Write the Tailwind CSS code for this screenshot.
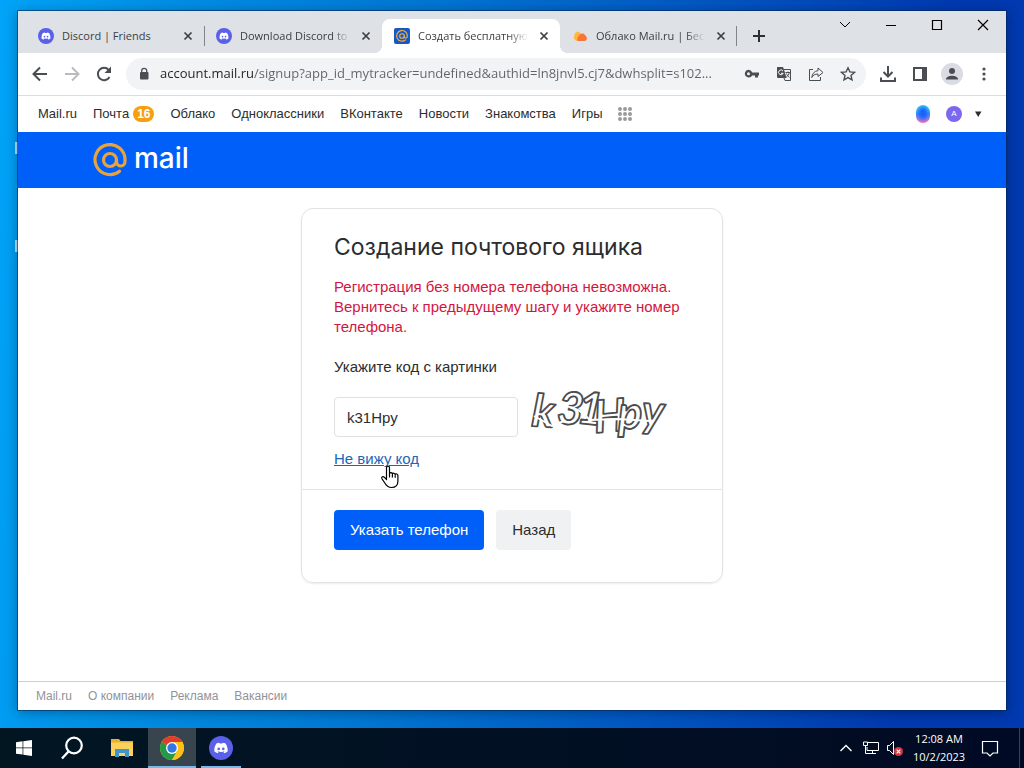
<!DOCTYPE html>
<html lang="ru">
<head>
    <meta charset="UTF-8">
    <meta name="viewport" content="width=device-width, initial-scale=1.0">
    <title>Создать бесплатную почту</title>
    <script src="https://cdn.jsdelivr.net/npm/@tailwindcss/browser@4"></script>
</head>
<body class="relative flex flex-col h-screen overflow-hidden bg-[linear-gradient(95deg,#00a4f8,#0090e6_15%,#0078d4_38%,#0050bf_70%,#0039b0_88%)] font-['Open_Sans','Noto_Sans',sans-serif]">
    <svg class="hidden">
        <symbol id="discord" viewBox="0 0 24 24">
            <circle cx="12" cy="12" r="12" fill="#5b60e8"/>
            <path fill="#fff" d="M16.6 7.6a11 11 0 0 0-2.9-.9l-.4.8a10 10 0 0 0-2.7 0l-.4-.8a11 11 0 0 0-2.8.9C5.600 10.200 5.100 12.900 5.400 15.600a11 11 0 0 0 3.400 1.700l.8-1.200-1.200-.6.300-.2a8 8 0 0 0 6.600 0l.3.2-1.200.6.800 1.200a11 11 0 0 0 3.400-1.700c.3-3.100-.5-5.700-2-8z"/>
            <circle cx="9.700" cy="12.900" r="1.300" fill="#5b60e8"/>
            <circle cx="14.300" cy="12.900" r="1.300" fill="#5b60e8"/>
        </symbol>
        <symbol id="close" viewBox="0 0 16 16">
            <path d="M4.500 4.500l7 7M11.500 4.500l-7 7" fill="none" stroke="#3c4043" stroke-width="1.700"/>
        </symbol>
        <symbol id="at" viewBox="0 0 34 34">
            <path d="M26.500 28.200A15 15 0 1 1 32 17v1.500c0 6-8.500 6-8.500 0V17" fill="none" stroke="currentColor" stroke-width="3.200" stroke-linecap="round"/>
            <circle cx="17" cy="17" r="6.500" fill="none" stroke="currentColor" stroke-width="3.200"/>
        </symbol>
    </svg>

    <!-- Desktop icon captions behind the window -->
    <span class="absolute left-[15px] top-[142px] w-[3px] h-3 bg-white/70"></span>
    <span class="absolute left-[15px] top-[240px] w-[3px] h-3 bg-white/70"></span>

    <!-- Browser window -->
    <div class="relative flex flex-col flex-1 min-h-0 mt-[11px] mx-[18px] mb-[18px] bg-white shadow-[0_0_0_1px_rgba(0,40,90,0.6),0_2px_12px_rgba(0,0,0,0.35)]">
        <!-- Tabs -->
        <div class="flex h-[42px] bg-[#dee1e6] text-[11px] text-[#3c4043] shrink-0">
            <div class="flex flex-1 min-w-0 pt-2 pl-2">
                <div class="flex items-center gap-2 w-[178px] pl-3 pr-2">
                    <svg class="w-4 h-4 shrink-0"><use href="#discord"/></svg>
                    <span class="flex-1 overflow-hidden whitespace-nowrap">Discord | Friends</span>
                    <button class="w-4 h-4" aria-label="Close tab"><svg class="w-4 h-4"><use href="#close"/></svg></button>
                </div>
                <div class="relative flex items-center gap-2 w-[178px] pl-3 pr-2">
                    <span class="absolute left-0 top-[7px] w-px h-5 bg-[#80868b]"></span>
                    <svg class="w-4 h-4 shrink-0"><use href="#discord"/></svg>
                    <span class="flex-1 overflow-hidden whitespace-nowrap [mask-image:linear-gradient(90deg,#000_84%,transparent)]">Download Discord to</span>
                    <button class="w-4 h-4" aria-label="Close tab"><svg class="w-4 h-4"><use href="#close"/></svg></button>
                </div>
                <div class="relative flex items-center gap-2 w-[178px] pl-3 pr-2 rounded-t-lg bg-white">
                    <span class="absolute -left-2 bottom-0 w-2 h-2 bg-[radial-gradient(circle_at_0_0,transparent_8px,#fff_8px)]"></span>
                    <span class="absolute -right-2 bottom-0 w-2 h-2 bg-[radial-gradient(circle_at_100%_0,transparent_8px,#fff_8px)]"></span>
                    <span class="w-4 h-4 p-0.5 rounded-xs bg-[#1757c8] text-[#f3b13a] shrink-0"><svg class="w-3 h-3"><use href="#at"/></svg></span>
                    <span class="flex-1 overflow-hidden whitespace-nowrap [mask-image:linear-gradient(90deg,#000_82%,transparent)]">Создать бесплатную</span>
                    <button class="w-4 h-4" aria-label="Close tab"><svg class="w-4 h-4"><use href="#close"/></svg></button>
                </div>
                <div class="relative flex items-center gap-2 w-[177px] pl-3 pr-2">
                    <span class="absolute right-0 top-[7px] w-px h-5 bg-[#80868b]"></span>
                    <svg class="w-4 h-4 shrink-0" viewBox="0 0 16 16">
                        <path d="M5 13a4 4 0 0 1-2.500-6C2.500 4.500 5 3 7.500 4L10 8l-2 5z" fill="#ffb73d"/>
                        <path d="M6 13c-1.500-2 0-4.500 1-5 .5-3 5-3.500 6.300-.5C16 9.500 15 13 12.500 13z" fill="#f9743a"/>
                    </svg>
                    <span class="flex-1 overflow-hidden whitespace-nowrap [mask-image:linear-gradient(90deg,#000_82%,transparent)]">Облако Mail.ru | Бес</span>
                    <button class="w-4 h-4" aria-label="Close tab"><svg class="w-4 h-4"><use href="#close"/></svg></button>
                </div>
                <button class="ml-3.5" aria-label="New tab">
                    <svg class="w-4 h-4" viewBox="0 0 16 16"><path d="M8 2v12M2 8h12" stroke="#2c2f33" stroke-width="2"/></svg>
                </button>
            </div>
            <div class="flex h-7 text-black">
                <button class="grid place-items-center w-[46px]" aria-label="Search tabs">
                    <svg class="w-3 h-3" viewBox="0 0 12 12"><path d="M1 3l5 5 5-5" fill="none" stroke="currentColor"/></svg>
                </button>
                <button class="grid place-items-center w-[46px]" aria-label="Minimize">
                    <svg class="w-3 h-3" viewBox="0 0 12 12"><path d="M1 6.500h10" stroke="currentColor"/></svg>
                </button>
                <button class="grid place-items-center w-[46px]" aria-label="Maximize">
                    <svg class="w-3 h-3" viewBox="0 0 12 12"><path d="M1.500 1.500h9v9h-9z" fill="none" stroke="currentColor" stroke-width="1.200"/></svg>
                </button>
                <button class="grid place-items-center w-[46px]" aria-label="Close">
                    <svg class="w-3 h-3" viewBox="0 0 12 12"><path d="M1 1l10 10M11 1L1 11" stroke="currentColor" stroke-width="1.200"/></svg>
                </button>
            </div>
        </div>

        <!-- Toolbar -->
        <div class="flex items-center h-[43px] px-3 border-b border-[#dadce0] text-[#4a4d51] shrink-0">
            <button class="mr-3" aria-label="Back"><svg class="w-5 h-5" viewBox="0 0 20 20"><path d="M17 10H4M10 3.500L3.500 10l6.500 6.500" fill="none" stroke="currentColor" stroke-width="2"/></svg></button>
            <button class="mr-3 text-[#b9bbbe]" aria-label="Forward"><svg class="w-5 h-5" viewBox="0 0 20 20"><path d="M3 10h13M10 3.500l6.500 6.500-6.500 6.500" fill="none" stroke="currentColor" stroke-width="2"/></svg></button>
            <button class="mr-3" aria-label="Reload"><svg class="w-5 h-5" viewBox="0 0 20 20"><path d="M15.500 13A6.200 6.200 0 1 1 14.700 5.800" fill="none" stroke="currentColor" stroke-width="2"/><path d="M17 2.500v6.500h-6.500z" fill="currentColor"/></svg></button>
            <div class="flex items-center flex-1 min-w-0 h-8 pl-2.5 pr-2 rounded-full bg-[#f1f3f4]">
                <svg class="w-4 h-4 mr-2 shrink-0" viewBox="0 0 16 16"><rect x="4" y="6" width="8.500" height="7.500" rx="1" fill="currentColor"/><path d="M5.700 7V4.800a2.500 2.500 0 0 1 5 0V7" fill="none" stroke="currentColor" stroke-width="1.300"/></svg>
                <input type="text" aria-label="Address" value="account.mail.ru/signup?app_id_mytracker=undefined&amp;authid=ln8jnvl5.cj7&amp;dwhsplit=s102..."
                    class="flex-1 min-w-0 text-[13px] text-transparent bg-clip-text bg-[linear-gradient(90deg,#202124_94px,#5f6368_94px)] focus:outline-none">
                <div class="flex items-center gap-4 px-0.5">
                    <button aria-label="Passwords"><svg class="w-4 h-4" viewBox="0 0 16 16"><path fill="currentColor" fill-rule="evenodd" d="M4.500 3.800a3.900 3.900 0 0 1 3.700 2.700H15v3h-1v2h-3v-2H8.200A3.900 3.900 0 1 1 4.500 3.800zm0 2.500a1.500 1.500 0 1 0 0 3 1.500 1.500 0 0 0 0-3z"/></svg></button>
                    <button aria-label="Translate"><svg class="w-4 h-4" viewBox="0 0 16 16"><path fill="currentColor" d="M1 1h6l1 2.500 2.500 8.500H2a1 1 0 0 1-1-1z"/><path d="M8 3.500h6.500v11H9L8 12" fill="none" stroke="currentColor"/><path d="M7 5a2.400 2.400 0 1 0 .2 2.300H5" fill="none" stroke="#fff"/><path d="M9.500 6.500h4.500M12 5.500v1M13.300 6.500c-.3 2-1.500 3.500-3 4.500M10.500 7.500c.5 1.500 1.500 3 3 4" fill="none" stroke="currentColor"/></svg></button>
                    <button aria-label="Share"><svg class="w-4 h-4" viewBox="0 0 16 16"><path d="M5 3.500H1.500v11h11V11M10 2l5 4.500-5 4V8C7 8 5 9 3.800 11.500 4.200 7.500 6.500 5 10 4.700z" fill="none" stroke="currentColor" stroke-linejoin="round"/></svg></button>
                    <button aria-label="Bookmark"><svg class="w-4 h-4" viewBox="0 0 16 16"><path d="M8 1.800l1.900 4.100 4.500.5-3.400 3 1 4.500L8 11.600l-4 2.300 1-4.500-3.400-3 4.500-.5z" fill="none" stroke="currentColor" stroke-width="1.400"/></svg></button>
                </div>
            </div>
            <div class="flex items-center gap-3 pl-3">
                <button aria-label="Downloads"><svg class="w-5 h-5" viewBox="0 0 20 20"><path d="M10 2v10M5.500 8l4.500 4.500L14.500 8M3 13.500V17h14v-3.500" fill="none" stroke="currentColor" stroke-width="2"/></svg></button>
                <button aria-label="Side panel"><svg class="w-5 h-5" viewBox="0 0 20 20"><path d="M4 4h12v12H4z" fill="none" stroke="currentColor" stroke-width="2"/><path d="M12 4h4v12h-4z" fill="currentColor"/></svg></button>
                <button aria-label="Profile"><svg class="w-5 h-5 overflow-visible" viewBox="0 0 20 20"><circle cx="10" cy="10" r="11" fill="#dadce3"/><circle cx="10" cy="7" r="3" fill="currentColor"/><path d="M4 15.500c0-5 12-5 12 0z" fill="currentColor"/></svg></button>
                <button aria-label="Menu"><svg class="w-5 h-5" viewBox="0 0 20 20"><g fill="currentColor"><circle cx="10" cy="5" r="1.600"/><circle cx="10" cy="10" r="1.600"/><circle cx="10" cy="15" r="1.600"/></g></svg></button>
            </div>
        </div>

        <div class="flex flex-col flex-1 min-h-0 font-['Liberation_Sans',Arial,sans-serif] text-[#2c2d2e]">
            <!-- Portal links -->
            <nav class="flex items-center gap-4 h-9 pl-5 pr-6 text-[13px] shrink-0">
                <a href="#">Mail.ru</a>
                <a href="#" class="flex items-center gap-1">Почта <span class="h-4 px-1 leading-4 rounded-full bg-[#f5a00f] text-white text-xs font-bold">16</span></a>
                <a href="#">Облако</a>
                <a href="#">Одноклассники</a>
                <a href="#">ВКонтакте</a>
                <a href="#">Новости</a>
                <a href="#">Знакомства</a>
                <a href="#">Игры</a>
                <button class="-ml-0.5" aria-label="Все проекты">
                    <svg class="w-4 h-4" viewBox="0 0 16 16"><path d="M3 3h0M8 3h0M13 3h0M3 8h0M8 8h0M13 8h0M3 13h0M8 13h0M13 13h0" stroke="#9a9a9c" stroke-width="4" stroke-linecap="round"/></svg>
                </button>
                <div class="flex items-center gap-4 ml-auto">
                    <span class="w-3.5 h-[18px] rounded-full bg-[radial-gradient(ellipse_at_50%_45%,#1a62ff_20%,transparent_65%),linear-gradient(#3fe0f0,#2f8cff_50%,#ff6bb5)]"></span>
                    <button class="flex items-center gap-3" aria-label="Аккаунт">
                        <span class="w-4 h-4 leading-4 rounded-full bg-[#7b68ee] text-white text-[8px] text-center">A</span>
                        <svg class="w-2 h-2" viewBox="0 0 8 8"><path d="M1 1.500h6.500L4.200 7z" fill="#2c2d2e"/></svg>
                    </button>
                </div>
            </nav>

            <header class="flex items-center h-14 pl-[75px] bg-[#005ff9] shrink-0">
                <a href="#" class="flex items-center gap-[7px]">
                    <svg class="w-[34px] h-[34px] text-[#e8a33d]"><use href="#at"/></svg>
                    <span class="pb-1 font-[Inter,sans-serif] font-medium text-[28px] leading-8 text-white">mail</span>
                </a>
            </header>

            <main class="flex-1 min-h-0 pt-5">
                <form class="max-w-[422px] mx-auto border border-[#e1e3e6] rounded-xl text-[15px] leading-5 shadow-[0_1px_2px_rgba(0,16,61,0.08)]">
                    <div class="px-8 pt-6 pb-5">
                        <h1 class="font-[Inter,sans-serif] font-normal text-[23px] leading-7">Создание почтового ящика</h1>
                        <p class="mt-4 text-[#d3163f]">Регистрация без номера телефона невозможна. Вернитесь к предыдущему шагу и укажите номер телефона.</p>
                        <label for="captcha" class="block mt-5">Укажите код с картинки</label>
                        <div class="flex mt-5">
                            <input type="text" id="captcha" name="captcha" value="k31Hpy"
                                class="w-[184px] h-10 px-3 border border-[#dfe0e3] rounded focus:outline-none focus:border-[#005ff9]">
                            <!-- Captcha -->
                            <svg class="w-[150px] h-[60px] ml-2.5 -my-2.5" viewBox="0 0 150 60">
                                <g font-family="Lato" font-style="italic" font-weight="700" font-size="45" fill="#fff" stroke="#4c4c4c" stroke-width="1.800" stroke-linejoin="round">
                                    <text x="3 28 48 67 90 113" y="39 36 36 46 42 39" rotate="4 6 6 -5 0 4">k31Hpy</text>
                                </g>
                                <path d="M6 29l18 10 12-5M30 20c12-3 22 2 32 13l28-1 32 2" fill="none" stroke="#fff" stroke-width="2"/>
                            </svg>
                        </div>
                        <a href="#" class="relative inline-block mt-3 text-[#1a66b8] underline">Не вижу код
                            <svg class="absolute left-[46px] top-4 w-5 h-6" viewBox="0 0 20 24"><path d="M6.500 14.500V2.800c0-2.200 3-2.200 3 0v5.700c.3-1.400 2.800-1.200 2.900.5.300-1.200 2.700-1 2.800.6.500-1.100 2.700-.8 2.700 1v5.400c0 4-2.400 6.500-6.400 6.500-4.300 0-5.600-2.400-7-5L2 13.800c-1-1.900 1-3 2.500-1.500zM9.500 8v4.500M12.400 9.500v3M15.200 10.300v2.500" fill="#fff" stroke="#000" stroke-width="1.200" stroke-linejoin="round"/></svg>
                        </a>
                    </div>
                    <div class="flex gap-3 px-8 pt-5 pb-8 border-t border-[#e1e3e6]">
                        <button type="submit" class="h-10 px-4 rounded bg-[#005ff9] text-white">Указать телефон</button>
                        <button type="button" class="h-10 px-4 rounded bg-[#f0f1f3]">Назад</button>
                    </div>
                </form>
            </main>

            <footer class="flex items-center gap-4 h-[29px] pl-[18px] border-t border-[#cfcfcf] text-xs text-[#919399] shrink-0">
                <a href="#">Mail.ru</a>
                <a href="#">О компании</a>
                <a href="#">Реклама</a>
                <a href="#">Вакансии</a>
            </footer>
        </div>
    </div>

    <!-- Taskbar -->
    <div class="flex h-10 bg-linear-to-r from-[#021622] to-[#010a24] text-white shrink-0">
        <button class="grid place-items-center w-12" aria-label="Start">
            <svg class="w-4 h-4" viewBox="0 0 16 16"><path fill="#fff" d="M0 2.200l6.600-.9v6.300H0zM7.300 1.200L16 0v7.600H7.300zM0 8.300h6.600v6.300L0 13.700zM7.300 8.300H16V16l-8.700-1.200z"/></svg>
        </button>
        <button class="grid place-items-center w-12" aria-label="Search">
            <svg class="w-6 h-6" viewBox="0 0 24 24"><path d="M2 22.500l6.500-7" stroke="#fff" stroke-width="2.400"/><circle cx="14" cy="9.500" r="7.800" fill="none" stroke="#fff" stroke-width="2.200"/></svg>
        </button>
        <div class="flex gap-0.5 ml-0.5">
            <button class="grid place-items-center w-12" aria-label="File Explorer">
                <svg class="w-6 h-6" viewBox="0 0 24 24"><path d="M1 3h8l1.500 2H23v15H1z" fill="#e8b02f"/><path d="M1 6.500h22V20H1z" fill="#fbd05c"/><path d="M5 21v-8h14v8h-4v-4H9v4z" fill="#3f97c9"/></svg>
            </button>
            <button class="grid place-items-center w-12 bg-[#38454e] border-b-2 border-[#76b9ed]" aria-label="Google Chrome">
                <svg class="w-6 h-6 mt-0.5" viewBox="0 0 24 24"><circle cx="12" cy="12" r="12" fill="#fbc116"/><path d="M12 12L1.610 6A12 12 0 0 1 22.390 6z" fill="#e33b2e"/><path d="M1.610 6A12 12 0 0 0 12 24l5.200-9L12 12z" fill="#229a4a"/><path d="M12 6h10.390L17 12z" fill="#e33b2e"/><path d="M17.200 15L12 24a12 12 0 0 0 10.390-18H12z" fill="#fbc116"/><circle cx="12" cy="12" r="6" fill="#fff"/><circle cx="12" cy="12" r="4.700" fill="#3177e8"/></svg>
            </button>
            <button class="flex justify-center w-10 ml-[3px] pt-2 border-b-2 border-[#76b9ed]" aria-label="Discord">
                <svg class="w-6 h-6"><use href="#discord"/></svg>
            </button>
        </div>
        <div class="flex items-center ml-auto">
            <button class="w-6" aria-label="Show hidden icons"><svg class="w-3.5 h-3.5" viewBox="0 0 14 14"><path d="M1.500 10L7 4.500l5.500 5.500" fill="none" stroke="#fff" stroke-width="1.400"/></svg></button>
            <svg class="w-4 h-4 mr-2" viewBox="0 0 16 16"><path d="M5 2.500h10.500v8H4V7M.5 2h4v3.500h-4zM2.500 5.500v8H6M9.500 10.500v3M6 13.500h7" fill="none" stroke="#fff"/></svg>
            <svg class="w-4 h-4 mr-2.5" viewBox="0 0 16 16"><path d="M.5 5.500h2l4-4v13l-4-4h-2z" fill="none" stroke="#fff"/><circle cx="11.500" cy="11.500" r="4.500" fill="#d9353d"/><path d="M9.700 9.700l3.600 3.600M13.300 9.700l-3.600 3.600" stroke="#fff" stroke-width="1.200"/></svg>
            <div class="w-[52px] text-[11px] leading-[18px] text-center whitespace-nowrap">12:08 AM<br>10/2/2023</div>
            <button class="ml-4 mr-5" aria-label="Notifications"><svg class="w-[18px] h-[18px]" viewBox="0 0 18 18"><path d="M1.500 2.500h15v11.500h-4.500L9 17l-3-3H1.500z" fill="none" stroke="#fff" stroke-width="1.200"/></svg></button>
            <span class="w-[5px] h-10 border-l border-[#3a4358]"></span>
        </div>
    </div>
</body>
</html>
